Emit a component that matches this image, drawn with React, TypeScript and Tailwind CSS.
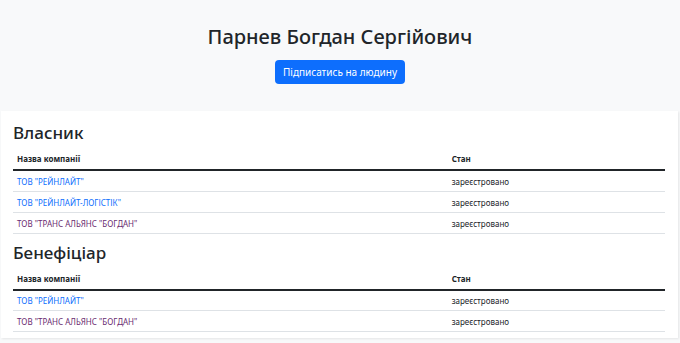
import React from 'react'

type Row = { name: string; visited?: boolean; status: string }

const owners: Row[] = [
  { name: 'ТОВ "РЕЙНЛАЙТ"', status: 'зареєстровано' },
  { name: 'ТОВ "РЕЙНЛАЙТ-ЛОГІСТІК"', status: 'зареєстровано' },
  { name: 'ТОВ "ТРАНС АЛЬЯНС "БОГДАН"', visited: true, status: 'зареєстровано' },
]

const beneficiaries: Row[] = [
  { name: 'ТОВ "РЕЙНЛАЙТ"', status: 'зареєстровано' },
  { name: 'ТОВ "ТРАНС АЛЬЯНС "БОГДАН"', visited: true, status: 'зареєстровано' },
]

function CompanyTable({ title, rows }: { title: string; rows: Row[] }) {
  return (
    <div>
      <h2 className="h-[28px] text-[17px] font-medium leading-[28px] text-[#212529]">{title}</h2>
      <table className="w-full border-collapse text-[8px] text-[#212529]">
        <thead>
          <tr className="h-[23px] border-b-2 border-[#212529]">
            <th className="w-2/3 px-[4px] pt-[2px] text-left font-bold">Назва компанії</th>
            <th className="px-[4px] pt-[2px] text-left font-bold">Стан</th>
          </tr>
        </thead>
        <tbody>
          {rows.map((r, i) => (
            <tr key={i} className="h-[21px] border-b border-[#dee2e6]">
              <td className="px-[4px] pt-[2px]">
                <a href="#" className={r.visited ? 'text-[#6a2c70]' : 'text-[#0d6efd]'}>
                  {r.name}
                </a>
              </td>
              <td className="px-[4px] pt-[2px]">{r.status}</td>
            </tr>
          ))}
        </tbody>
      </table>
    </div>
  )
}

export default function App() {
  return (
    <div className="min-h-[343px] bg-[#f8f9fa] font-['Noto_Sans',sans-serif]">
      <header className="flex h-[111px] flex-col items-center pt-[21px]">
        <h1 className="text-[20px] font-medium leading-[32px] text-[#212529]">Парнев Богдан Сергійович</h1>
        <button className="mt-[7px] h-[24px] w-[130px] rounded-[4px] bg-[#0d6efd] text-[10px] text-white">
          Підписатись на людину
        </button>
      </header>
      <main className="ml-[1px] mr-[2px] space-y-[5px] bg-white pb-[6px] pl-[12px] pr-[13px] pt-[8px] shadow-[1px_1px_2px_rgba(0,0,0,0.08)]">
        <CompanyTable title="Власник" rows={owners} />
        <CompanyTable title="Бенефіціар" rows={beneficiaries} />
      </main>
    </div>
  )
}
